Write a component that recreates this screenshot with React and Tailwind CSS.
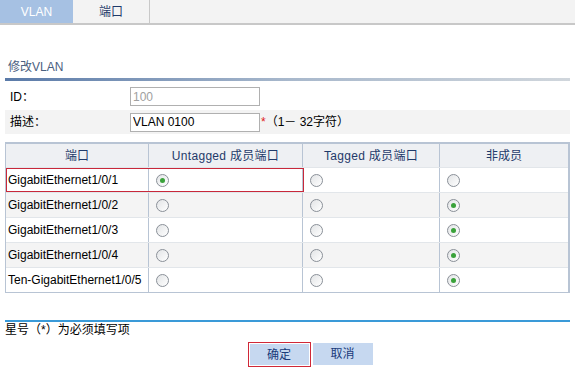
import React from "react";

const ports = [
  { name: "GigabitEthernet1/0/1", sel: 0 },
  { name: "GigabitEthernet1/0/2", sel: 2 },
  { name: "GigabitEthernet1/0/3", sel: 2 },
  { name: "GigabitEthernet1/0/4", sel: 2 },
  { name: "Ten-GigabitEthernet1/0/5", sel: 2 },
];

function Radio({ on }) {
  return (
    <span className="inline-flex items-center justify-center w-[13px] h-[13px] rounded-full border border-[#8a9098] bg-gradient-to-br from-[#e2e4e6] to-white">
      {on && <span className="w-[5px] h-[5px] rounded-full bg-[#3aa23a]" />}
    </span>
  );
}

export default function App() {
  return (
    <div
      className="w-[575px] h-[369px] bg-white text-[12px] text-black overflow-hidden"
      style={{ fontFamily: '"Liberation Sans", "Noto Sans CJK SC", sans-serif' }}
    >
      {/* tabs */}
      <div className="flex h-[25px] bg-[#f3f3f3] border-b-2 border-[#c8c8c8]">
        <div className="w-[73px] flex items-center justify-center bg-[#a6c1e3] text-white">VLAN</div>
        <div className="w-[77px] flex items-center justify-center text-[#1f3a6a] border-r border-[#c8c8c8]">端口</div>
      </div>

      {/* section title */}
      <div className="mt-[35px] px-[8px] text-[#4a6080] leading-[14px]">修改VLAN</div>
      <div className="mx-[5px] mt-[4px] h-[3px] bg-gradient-to-r from-[#5a7aa8] via-[#a8b8cc] to-[#d0d6dc]" />

      {/* form rows */}
      <div className="mx-[5px] mt-[3px]">
        <div className="flex items-center h-[25px]">
          <div className="w-[125px] pl-[5px]">ID：</div>
          <input
            readOnly
            value="100"
            className="w-[130px] h-[19px] border border-[#b0b0b0] px-[2px] text-[#a0a0a0] text-[12px] outline-none"
          />
        </div>
        <div className="flex items-center h-[24px] mt-[1px] bg-[#f3f3f3]">
          <div className="w-[125px] pl-[5px]">描述：</div>
          <input
            readOnly
            value="VLAN 0100"
            className="w-[130px] h-[19px] border border-[#b0b0b0] bg-white px-[2px] text-[12px] outline-none"
          />
          <span className="text-[#e02020] ml-[1px]">*</span>
          <span>（1－ 32字符）</span>
        </div>
      </div>

      {/* table */}
      <div className="mx-[5px] mt-[8px] border border-[#b8c4d4] border-t-2 border-r-2">
        <div className="flex h-[23px] bg-[#eef0f3] text-[#1f3a6a]">
          <div className="w-[143px] flex items-center justify-center border-r border-[#b8c4d4]">端口</div>
          <div className="w-[154px] flex items-center justify-center border-r border-[#b8c4d4] tracking-[0.3px]">Untagged 成员端口</div>
          <div className="w-[137px] flex items-center justify-center border-r border-[#b8c4d4] tracking-[0.3px]">Tagged 成员端口</div>
          <div className="flex-1 flex items-center justify-center">非成员</div>
        </div>
        {ports.map((p, i) => (
          <div
            key={p.name}
            className={`relative flex h-[25px] border-t border-[#e2e6ea] ${i % 2 === 1 ? "bg-[#f4f4f4]" : "bg-white"}`}
          >
            {i === 0 && (
              <div className="absolute z-10 left-0 top-0 w-[298px] h-[24px] border border-[#c8283a] pointer-events-none" />
            )}
            <div className="w-[143px] flex items-center pl-[2px] border-r border-[#b8c4d4]">{p.name}</div>
            <div className="w-[154px] flex items-center pl-[7px] border-r border-[#b8c4d4]">
              <Radio on={p.sel === 0} />
            </div>
            <div className="w-[137px] flex items-center pl-[7px] border-r border-[#b8c4d4]">
              <Radio on={p.sel === 1} />
            </div>
            <div className="flex-1 flex items-center pl-[7px]">
              <Radio on={p.sel === 2} />
            </div>
          </div>
        ))}
      </div>

      {/* footer */}
      <div className="mx-[5px] mt-[27px] h-[2px] bg-[#3a9ad8]" />
      <div className="px-[5px] mt-[1px] leading-[14px]">星号（*）为必须填写项</div>
      <div className="flex justify-center gap-[2px] mt-[5px] pl-[45px]">
        <button className="w-[63px] h-[25px] border border-[#d02838] p-[1px]">
          <span className="flex items-center justify-center w-full h-full bg-[#c6d8f0] text-[#1a3a7a]">确定</span>
        </button>
        <button className="w-[60px] h-[22px] mt-[1px] bg-[#c6d8f0] text-[#1a3a7a]">取消</button>
      </div>
    </div>
  );
}
